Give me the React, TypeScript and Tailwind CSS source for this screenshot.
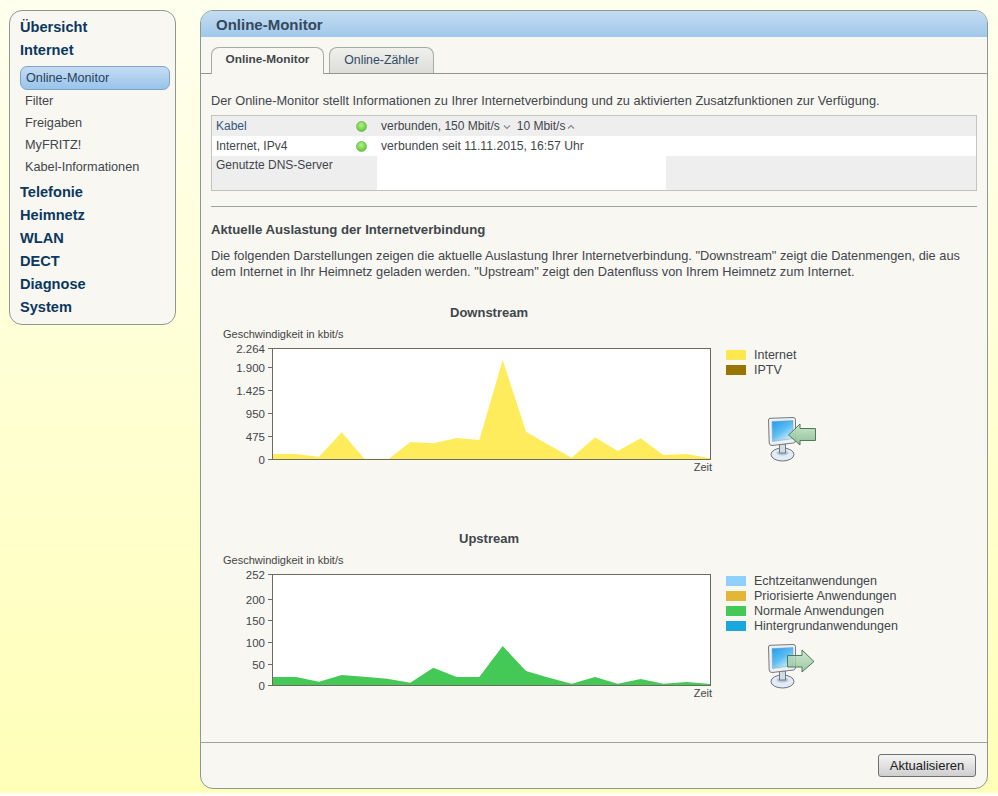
const navTop = ["Übersicht", "Internet"];
const navSub = ["Filter", "Freigaben", "MyFRITZ!", "Kabel-Informationen"];
const navBottom = ["Telefonie", "Heimnetz", "WLAN", "DECT", "Diagnose", "System"];

type Tick = { label: string; y: number };

function Chart({
  ticks,
  points,
  fill,
}: {
  ticks: Tick[];
  points: string;
  fill: string;
}) {
  // svg origin is x=215 and 20px above the plot
  return (
    <svg width="505" height="146" className="block" fontFamily="'Liberation Sans', Arial, sans-serif">
      <text x="8" y="10" fontSize="11" fill="#444">
        Geschwindigkeit in kbit/s
      </text>
      <rect x="57.5" y="20.5" width="438" height="111" fill="#fff" />
      <polygon points={points} fill={fill} />
      <rect x="57.5" y="20.5" width="438" height="111" fill="none" stroke="#6b6b62" />
      {ticks.map((t) => (
        <g key={t.label}>
          <line x1="53" x2="57" y1={t.y + 0.5} y2={t.y + 0.5} stroke="#6b6b62" />
          <text x="50" y={t.y + 4.5} fontSize="11.5" fill="#3f464c" textAnchor="end">
            {t.label}
          </text>
        </g>
      ))}
      <text x="497" y="143" fontSize="11" fill="#3f464c" textAnchor="end">
        Zeit
      </text>
    </svg>
  );
}

function MonitorIcon({ up }: { up?: boolean }) {
  const scr = up ? "scrU" : "scrD";
  const arr = up ? "arrU" : "arrD";
  return (
    <svg width="50" height="46" viewBox="0 0 50 46" className="block">
      <defs>
        <linearGradient id={scr} x1="0" y1="0" x2="0.7" y2="1">
          <stop offset="0" stopColor="#1d9cee" />
          <stop offset="0.55" stopColor="#5cbdf3" />
          <stop offset="1" stopColor="#d6f0fb" />
        </linearGradient>
        <linearGradient id={arr} x1="0" y1="0" x2="0" y2="1">
          <stop offset="0" stopColor="#c6e4c6" />
          <stop offset="1" stopColor="#86bd91" />
        </linearGradient>
      </defs>
      <ellipse cx="14.5" cy="37.5" rx="11.5" ry="6.5" fill="#e3ebf5" stroke="#66737f" />
      <ellipse cx="14.5" cy="36" rx="6" ry="2.5" fill="#b9c6d3" />
      <rect x="11.5" y="27" width="6" height="9" fill="#d3dbe3" stroke="#6d7a89" />
      <path
        d="M0.5 3 Q0.5 1.5 2 1.3 L25 0.5 Q27.5 0.5 27.5 2.5 L27.5 23.5 Q27.5 25.5 25.5 26 L4 28.5 Q1.5 28.5 1.2 26 Z"
        fill="#eef1f4"
        stroke="#6f7b86"
      />
      <path d="M4 4.5 L25 3.5 L25 21.5 L4.5 24.5 Z" fill={`url(#${scr})`} stroke="#8a9aa8" strokeWidth="0.5" />
      {up ? (
        <path
          d="M19.5 11.5 L34 11.5 L34 6 L46 17.5 L34 28 L34 23 L19.5 23 Z"
          fill={`url(#${arr})`}
          fillOpacity="0.8"
          stroke="#4d7a5c"
        />
      ) : (
        <path
          d="M47.5 11.5 L32 11.5 L32 7 L20.5 18 L32 28 L32 23.5 L47.5 23.5 Z"
          fill={`url(#${arr})`}
          fillOpacity="0.92"
          stroke="#4d7a5c"
        />
      )}
    </svg>
  );
}

function Legend({ items }: { items: { color: string; label: string }[] }) {
  return (
    <div className="flex flex-col">
      {items.map((i) => (
        <div key={i.label} className="flex h-[15px] items-start gap-[8px] text-[12.5px] leading-[15px]">
          <span className={`mt-[2px] h-[10px] w-[20px] ${i.color}`} />
          <span>{i.label}</span>
        </div>
      ))}
    </div>
  );
}

function Dot() {
  return (
    <span className="block h-[11px] w-[11px] rounded-full border border-[#78c05a] bg-[radial-gradient(circle_at_45%_35%,#b8ee8c,#49c022)]" />
  );
}

export default function App() {
  return (
    <div className="flex min-h-[796px] items-start bg-[linear-gradient(#ffffee_0px,#ffffb8_792px,#fffff0_793px)] pt-[10px] pl-[9px] font-['Liberation_Sans',Arial,sans-serif] text-[12px] text-[#3f464c]">
      <nav className="w-[167px] rounded-[13px] border border-[#8c9a90] bg-[#f8f7f2] pt-[6px] pr-[5px] pb-[5px] pl-[10px]">
        {navTop.map((n) => (
          <div key={n} className="h-[23px] text-[14.6px] leading-[21px] font-bold text-[#0b3760]">
            {n}
          </div>
        ))}
        <div className="mt-[3px] mb-[3px] text-[12.7px]">
          <div className="flex h-[24px] items-center rounded-[7px] border border-[#7ea3c4] bg-gradient-to-b from-[#c5dcf2] to-[#98c4ec] pt-[1px] pl-[5px] text-[#27435c]">
            Online-Monitor
          </div>
          {navSub.map((n) => (
            <div key={n} className="flex h-[22px] items-center pt-[1px] pl-[5px]">
              {n}
            </div>
          ))}
        </div>
        {navBottom.map((n) => (
          <div key={n} className="h-[23px] text-[14.6px] leading-[23px] font-bold text-[#0b3760]">
            {n}
          </div>
        ))}
      </nav>

      <main className="ml-[24px] flex h-[779px] w-[788px] flex-col overflow-hidden rounded-[13px] border border-[#8c9a90] bg-[#f8f7f2]">
        <div className="flex h-[26px] items-center bg-gradient-to-b from-[#c4dcf2] to-[#a0c8ea] pt-[2px] pl-[15px] text-[15px] font-bold text-[#34495c]">
          Online-Monitor
        </div>

        <div className="flex h-[37px] items-end gap-[5px] border-b border-[#8c9a90] pl-[10px]">
          <div className="relative top-px flex h-[27px] w-[113px] items-center justify-center rounded-t-[8px] border border-b-0 border-[#a3ada5] bg-[#f8f7f2] pb-[2px] text-[11.8px] font-bold">
            Online-Monitor
          </div>
          <div className="flex h-[26px] w-[105px] items-center justify-center rounded-t-[8px] border border-b-0 border-[#a3ada5] bg-gradient-to-b from-[#f0f0ec] to-[#dcdcd8] pb-[1px] text-[12.3px] text-[#2f4a66]">
            Online-Zähler
          </div>
        </div>

        <div className="flex-1 px-[10px]">
          <p className="mt-[19px] text-[12.8px] leading-[15px]">
            Der Online-Monitor stellt Informationen zu Ihrer Internetverbindung und zu aktivierten Zusatzfunktionen zur Verfügung.
          </p>

          <div className="mt-[7px] border border-[#c4c4bf] bg-[#eeeeee]">
            <div className="flex h-[20px] items-center">
              <span className="w-[144px] pb-[1px] pl-[4px] text-[#34557c]">Kabel</span>
              <Dot />
              <span className="ml-[14px] flex items-center">
                verbunden, 150 Mbit/s
                <svg width="10" height="6" viewBox="0 0 10 6" className="mt-[2px] mr-[5px] ml-[2px]">
                  <path d="M2 1.5 L5 4.5 L8 1.5" fill="none" stroke="#888" strokeWidth="1.2" />
                </svg>
                10 Mbit/s
                <svg width="10" height="6" viewBox="0 0 10 6" className="mt-[2px] ml-[1px]">
                  <path d="M2 4.5 L5 1.5 L8 4.5" fill="none" stroke="#888" strokeWidth="1.2" />
                </svg>
              </span>
            </div>
            <div className="flex h-[20px] items-center bg-white">
              <span className="w-[144px] pl-[4px]">Internet, IPv4</span>
              <Dot />
              <span className="ml-[14px] text-[12.2px]">verbunden seit 11.11.2015, 16:57 Uhr</span>
            </div>
            <div className="flex h-[34px]">
              <span className="w-[165px] pl-[4px]">Genutzte DNS-Server</span>
              <span className="w-[289px] bg-white" />
            </div>
          </div>

          <hr className="mt-[15px] border-[#9aa69c]" />

          <h3 className="mt-[15px] text-[13.2px] leading-[15px] font-bold">
            Aktuelle Auslastung der Internetverbindung
          </h3>
          <p className="mt-[11px] text-[12.8px] leading-[16px]">
            Die folgenden Darstellungen zeigen die aktuelle Auslastung Ihrer Internetverbindung. "Downstream" zeigt die Datenmengen, die aus dem Internet in Ihr Heimnetz geladen werden. "Upstream" zeigt den Datenfluss von Ihrem Heimnetz zum Internet.
          </p>

          <h4 className="mt-[25px] ml-[239px] text-[13px] leading-[15px] font-bold">Downstream</h4>
          <div className="mt-[8px] flex items-start">
            <div className="ml-[4px]">
              <Chart
                fill="#ffec5c"
                points="57.5,131.5 57.5,126 81,126 104,128.7 126.7,104.3 149.3,130.7 174,130.7 195.3,114 218.3,115.3 241.7,110 264.3,112 287.7,32 311,103.7 334,117 356.7,129.7 380,109.3 402.7,123 425.7,110.3 448.3,127 471.7,126 495.5,130.3 495.5,131.5"
                ticks={[
                  { label: "2.264", y: 20 },
                  { label: "1.900", y: 39 },
                  { label: "1.425", y: 62 },
                  { label: "950", y: 85 },
                  { label: "475", y: 108 },
                  { label: "0", y: 131 },
                ]}
              />
            </div>
            <div className="mt-[20px] ml-[6px] flex flex-col">
              <Legend
                items={[
                  { color: "bg-[#ffe74f]", label: "Internet" },
                  { color: "bg-[#9a7400]", label: "IPTV" },
                ]}
              />
              <div className="mt-[39px] ml-[42px]">
                <MonitorIcon />
              </div>
            </div>
          </div>

          <h4 className="mt-[57px] ml-[248px] text-[13px] leading-[15px] font-bold">Upstream</h4>
          <div className="mt-[8px] flex items-start">
            <div className="ml-[4px]">
              <Chart
                fill="#45c956"
                points="57.5,131.5 57.5,123 81,123 104,127.7 126.7,121 149.3,122.7 172,124.7 195.3,128.7 218.3,113.7 241.7,123 264.3,123 287.7,92 311,117 334,123.7 356.7,129.7 380,123 402.7,129.7 425.7,125 448.3,129.7 471.7,128 495.5,130 495.5,131.5"
                ticks={[
                  { label: "252", y: 20 },
                  { label: "200", y: 45 },
                  { label: "150", y: 66 },
                  { label: "100", y: 88 },
                  { label: "50", y: 110 },
                  { label: "0", y: 131 },
                ]}
              />
            </div>
            <div className="mt-[20px] ml-[6px] flex flex-col">
              <Legend
                items={[
                  { color: "bg-[#8ed0ff]", label: "Echtzeitanwendungen" },
                  { color: "bg-[#e3b637]", label: "Priorisierte Anwendungen" },
                  { color: "bg-[#45c956]", label: "Normale Anwendungen" },
                  { color: "bg-[#18a7de]", label: "Hintergrundanwendungen" },
                ]}
              />
              <div className="mt-[10px] ml-[42px]">
                <MonitorIcon up />
              </div>
            </div>
          </div>
        </div>

        <div className="flex h-[46px] items-start justify-end border-t border-[#9aa69c] pt-[11px] pr-[11px]">
          <button className="h-[23px] w-[98px] rounded-[3px] border border-[#6f6f6f] bg-gradient-to-b from-[#f4f4f4] to-[#cfcfcf] text-[13px] text-[#222]">
            Aktualisieren
          </button>
        </div>
      </main>
    </div>
  );
}
